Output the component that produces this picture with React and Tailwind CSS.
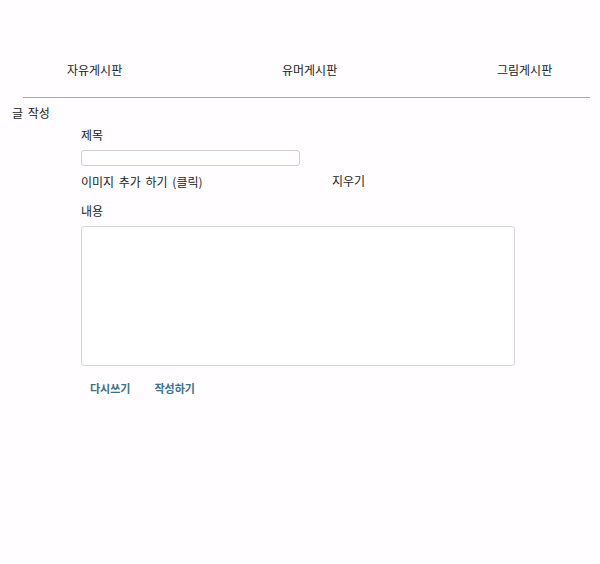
export default function App() {
  const font = { fontFamily: '"Noto Sans CJK KR", "Noto Sans", sans-serif' };
  return (
    <div className="min-h-[564px] w-[600px] overflow-hidden bg-[#fffdff] text-[#222] text-[12px] [word-spacing:2px]" style={font}>
      {/* 상단 메뉴 */}
      <nav className="flex pt-[61px] pl-[67px] h-[97px]">
        <a className="shrink-0 w-[215px] leading-[18px]">자유게시판</a>
        <a className="shrink-0 w-[215px] leading-[18px]">유머게시판</a>
        <a className="leading-[18px]">그림게시판</a>
      </nav>
      <hr className="ml-[23px] w-[567px] border-0 border-t border-[#a9a9a9]" />

      <h2 className="pl-[12px] pt-[6px] leading-[18px] text-[12px] font-normal">글 작성</h2>

      <form className="pl-[81px]">
        <label className="block pt-[4px] leading-[18px]">제목</label>
        <input type="text" className="mt-[6px] block w-[219px] h-[16px] border border-[#cfcfcf] rounded-[3px] bg-white" />
        <div className="flex mt-[7px] leading-[18px]">
          <span className="w-[251px]">이미지 추가 하기 (클릭)</span>
          <span className="-mt-[1px]">지우기</span>
        </div>
        <label className="block mt-[11px] leading-[18px]">내용</label>
        <textarea className="mt-[6px] block w-[434px] h-[140px] border border-[#d6d6d6] rounded-[3px] bg-white resize-none" />
        <div className="flex gap-[24px] pl-[9px] mt-[14px]">
          <button type="button" className="text-[11px] font-bold text-[#3d6f8a] leading-[16px]">다시쓰기</button>
          <button type="button" className="text-[11px] font-bold text-[#3d6f8a] leading-[16px]">작성하기</button>
        </div>
      </form>
    </div>
  );
}
